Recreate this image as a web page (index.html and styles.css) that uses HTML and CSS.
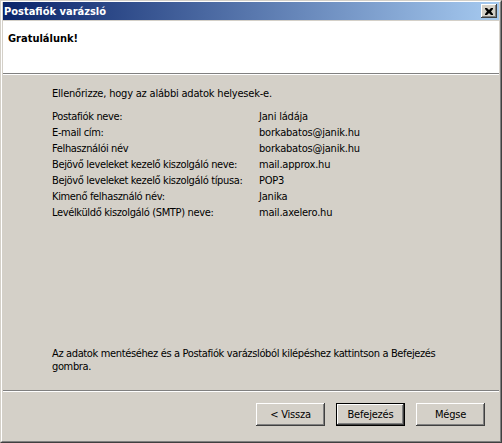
FILE: index.html
```html
<!DOCTYPE html>
<html lang="hu">
<head>
  <meta charset="UTF-8" />
  <meta name="viewport" content="width=device-width, initial-scale=1.0" />
  <title>Postafiók varázsló</title>
  <link rel="stylesheet" href="styles.css">
</head>
<body>
  <!-- Wizard window -->
  <div class="window">
    <div class="frame">
      <div class="titlebar">
        <span class="title">Postafiók varázsló</span>
        <button type="button" class="close" aria-label="Bezárás">
          <svg width="8" height="7" viewBox="0 0 8 7">
            <path d="M0 0h2l2 2 2-2h2v1l-2 2.5 2 2.5v1h-2l-2-2-2 2h-2v-1l2-2.5-2-2.5z" fill="#000" />
          </svg>
        </button>
      </div>

      <div class="client">
        <div class="header">
          <h1>Gratulálunk!</h1>
        </div>

        <div class="content">
          <p class="intro">Ellenőrizze, hogy az alábbi adatok helyesek-e.</p>
          <dl class="fields">
            <dt>Postafiók neve:</dt><dd>Jani ládája</dd>
            <dt>E-mail cím:</dt><dd>borkabatos@janik.hu</dd>
            <dt>Felhasználói név</dt><dd>borkabatos@janik.hu</dd>
            <dt>Bejövő leveleket kezelő kiszolgáló neve:</dt><dd>mail.approx.hu</dd>
            <dt>Bejövő leveleket kezelő kiszolgáló típusa:</dt><dd>POP3</dd>
            <dt>Kimenő felhasználó név:</dt><dd>Janika</dd>
            <dt>Levélküldő kiszolgáló (SMTP) neve:</dt><dd>mail.axelero.hu</dd>
          </dl>
          <p class="note">Az adatok mentéséhez és a Postafiók varázslóból kilépéshez kattintson a Befejezés<br>gombra.</p>
        </div>

        <div class="footer">
          <button type="button" class="btn">&lt; Vissza</button>
          <button type="button" class="btn default">Befejezés</button>
          <button type="button" class="btn">Mégse</button>
        </div>
      </div>
    </div>
  </div>
</body>
</html>
```

FILE: styles.css
```css
* {
  margin: 0;
  padding: 0;
  box-sizing: border-box;
}

body {
  font-family: 'DejaVu Sans Condensed', 'DejaVu Sans', sans-serif;
  font-size: 11px;
  color: #000;
  background: #d4d0c8;
  overflow: hidden;
}

.window {
  width: 502px;
  height: 443px;
  border: 1px solid;
  border-color: #d4d0c8 #404040 #404040 #d4d0c8;
}

.frame {
  height: 100%;
  display: flex;
  flex-direction: column;
  border: 1px solid;
  border-color: #fff #808080 #808080 #fff;
  padding: 0 1px 1px;
  background: #d4d0c8;
}

.titlebar {
  height: 18px;
  display: flex;
  align-items: center;
  justify-content: space-between;
  padding: 0 2px 0 1px;
  background: linear-gradient(to right, #0a246a, #a6caf0);
}

.title {
  color: #fff;
  font-weight: bold;
}

.close {
  width: 16px;
  height: 14px;
  display: flex;
  align-items: center;
  justify-content: center;
  border: none;
  background: #d4d0c8;
  box-shadow: inset -1px -1px #404040, inset 1px 1px #fff, inset -2px -2px #808080;
}

.close svg {
  display: block;
}

.client {
  flex: 1;
  display: flex;
  flex-direction: column;
  margin-top: 1px;
}

.header {
  height: 53px;
  padding: 11px 0 0 5px;
  background: #fff;
  border-bottom: 1px solid #808080;
}

.header h1 {
  font-size: 11px;
  line-height: 13px;
}

.content {
  flex: 1;
  display: flex;
  flex-direction: column;
  border-top: 1px solid #fff;
  padding: 11px 0 17px 49px;
  letter-spacing: -0.2px;
}

.intro {
  line-height: 16px;
  margin-bottom: 7px;
}

.fields {
  display: grid;
  grid-template-columns: 207px auto;
  line-height: 16px;
}

.fields dt {
  letter-spacing: -0.35px;
}

.note {
  margin-top: auto;
  line-height: 13px;
  letter-spacing: -0.36px;
}

.footer {
  height: 50px;
  display: flex;
  justify-content: flex-end;
  gap: 11px;
  padding: 12px 14px 0 0;
  border-top: 1px solid #808080;
  box-shadow: inset 0 1px #fff;
}

.btn {
  width: 69px;
  height: 23px;
  border: none;
  background: #d4d0c8;
  font-family: inherit;
  font-size: 11px;
  color: #000;
  letter-spacing: -0.2px;
  box-shadow: inset -1px -1px #404040, inset 1px 1px #fff, inset -2px -2px #808080;
}

.btn.default {
  box-shadow: inset 0 0 0 1px #000, inset -2px -2px #404040, inset 2px 2px #fff, inset -3px -3px #808080;
}
```
